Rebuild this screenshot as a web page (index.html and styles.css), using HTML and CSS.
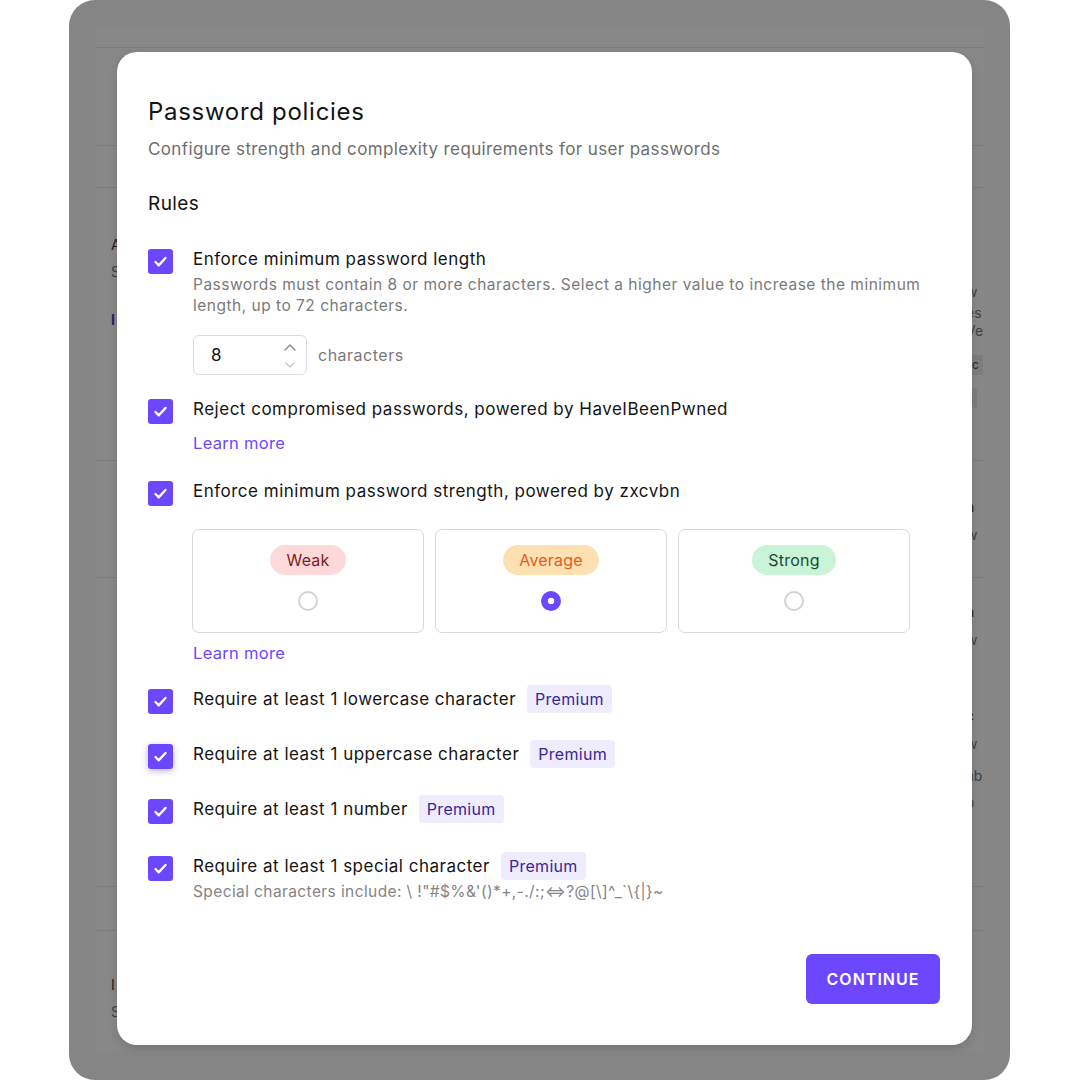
FILE: index.html
```html
<!DOCTYPE html>
<html lang="en">
<head>
<meta charset="utf-8">
<title>Password policies</title>
<link rel="stylesheet" href="styles.css">
</head>
<body>
<div class="frame">
  <div class="page">
    <div class="page-row head"></div>
    <div class="page-row r1"></div>
    <div class="page-row r2"></div>
    <div class="page-row r3">
      <span class="peek pl" style="top:49px">A</span>
      <span class="peek pl dim" style="top:76px">S</span>
      <span class="peek pl blue" style="top:124px">I</span>
      <span class="peek pr dim" style="top:96px">w</span>
      <span class="peek pr dim" style="top:117px">es</span>
      <span class="peek pr dim" style="top:135px">Ve</span>
      <span class="peek pr tag" style="top:167px">ec</span>
      <span class="peek pr tag" style="top:200px">R</span>
    </div>
    <div class="page-row r4">
      <span class="peek pr" style="top:38px">n</span>
      <span class="peek pr dim" style="top:66px">w</span>
    </div>
    <div class="page-row r5">
      <span class="peek pr" style="top:26px">n</span>
      <span class="peek pr dim" style="top:54px">w</span>
      <span class="peek pr" style="top:130px">c</span>
      <span class="peek pr dim" style="top:158px">w</span>
      <span class="peek pr dim" style="top:190px">ab</span>
      <span class="peek pr dim" style="top:216px">n</span>
    </div>
    <div class="page-row r6"></div>
    <div class="page-row r7">
      <span class="peek pl" style="top:46px">I</span>
      <span class="peek pl dim" style="top:73px">S</span>
      <span class="peek pr dim" style="top:94px">r</span>
    </div>
  </div>

  <div class="modal">
    <h1 class="title">Password policies</h1>
    <p class="subtitle">Configure strength and complexity requirements for user passwords</p>
    <h2 class="section">Rules</h2>

    <div class="rules">
      <div class="rule">
        <span class="cb"><svg viewBox="0 0 25 25"><path d="M7.5 13l3.3 3.3L17.5 9" /></svg></span>
        <div class="body">
          <div class="line"><span class="label">Enforce minimum password length</span></div>
          <p class="desc">Passwords must contain 8 or more characters. Select a higher value to increase the minimum length, up to 72 characters.</p>
          <div class="len">
            <div class="num">
              <span class="val">8</span>
              <svg class="spin" viewBox="0 0 14 34"><path class="up" d="M2 12l5-5 5 5"/><path class="down" d="M3 25l4 4 4-4"/></svg>
            </div>
            <span class="unit">characters</span>
          </div>
        </div>
      </div>

      <div class="rule r-pwned">
        <span class="cb"><svg viewBox="0 0 25 25"><path d="M7.5 13l3.3 3.3L17.5 9" /></svg></span>
        <div class="body">
          <div class="line"><span class="label">Reject compromised passwords, powered by HaveIBeenPwned</span></div>
          <a class="link">Learn more</a>
        </div>
      </div>

      <div class="rule r-strength">
        <span class="cb"><svg viewBox="0 0 25 25"><path d="M7.5 13l3.3 3.3L17.5 9" /></svg></span>
        <div class="body">
          <div class="line"><span class="label">Enforce minimum password strength, powered by zxcvbn</span></div>
          <div class="cards">
            <div class="card"><span class="pill weak">Weak</span><span class="radio"></span></div>
            <div class="card"><span class="pill avg">Average</span><span class="radio on"></span></div>
            <div class="card"><span class="pill strong">Strong</span><span class="radio"></span></div>
          </div>
          <a class="link link2">Learn more</a>
        </div>
      </div>

      <div class="rule r-lower">
        <span class="cb"><svg viewBox="0 0 25 25"><path d="M7.5 13l3.3 3.3L17.5 9" /></svg></span>
        <div class="body">
          <div class="line"><span class="label">Require at least 1 lowercase character</span><span class="badge">Premium</span></div>
        </div>
      </div>

      <div class="rule r-upper">
        <span class="cb focus"><svg viewBox="0 0 25 25"><path d="M7.5 13l3.3 3.3L17.5 9" /></svg></span>
        <div class="body">
          <div class="line"><span class="label">Require at least 1 uppercase character</span><span class="badge">Premium</span></div>
        </div>
      </div>

      <div class="rule r-number">
        <span class="cb"><svg viewBox="0 0 25 25"><path d="M7.5 13l3.3 3.3L17.5 9" /></svg></span>
        <div class="body">
          <div class="line"><span class="label">Require at least 1 number</span><span class="badge">Premium</span></div>
        </div>
      </div>

      <div class="rule r-special">
        <span class="cb"><svg viewBox="0 0 25 25"><path d="M7.5 13l3.3 3.3L17.5 9" /></svg></span>
        <div class="body">
          <div class="line"><span class="label">Require at least 1 special character</span><span class="badge">Premium</span></div>
          <p class="desc desc2">Special characters include: \ !"#$%&amp;'()*+,-./:;⇔?@[\]^_`\{|}~</p>
        </div>
      </div>
    </div>

    <div class="footer">
      <button class="btn">CONTINUE</button>
    </div>
  </div>
</div>
</body>
</html>
```

FILE: styles.css
```css
* { box-sizing: border-box; }

html, body {
  margin: 0;
  padding: 0;
  background: #ffffff;
}

body {
  font-family: Inter, "Noto Sans", "Liberation Sans", sans-serif;
  color: #141414;
  width: 1080px;
  height: 1081px;
  overflow: hidden;
}

.frame {
  position: relative;
  margin-left: 69px;
  width: 941px;
  height: 1080px;
  border-radius: 26px;
  background: #858585;
  padding: 27px 26px;
}

.page {
  position: relative;
  height: 1026px;
  background: #878787;
  display: flex;
  flex-direction: column;
}

.page-row {
  position: relative;
  flex: none;
  border-bottom: 1px solid #7b7b7b;
}
.head { height: 21px; }
.r1 { height: 98px; }
.r2 { height: 42px; }
.r3 { height: 273px; }
.r4 { height: 117px; }
.r5 { height: 309px; }
.r6 { height: 44px; }
.r7 { flex: 1; border-bottom: none; }

.peek {
  position: absolute;
  font-size: 14px;
  line-height: 16px;
  color: #1e1e1e;
  white-space: nowrap;
}
.peek.pl { left: 16px; }
.peek.pr { left: 871px; }
.peek.dim { color: #404040; }
.peek.blue { color: #2a2070; font-weight: 700; }
.peek.tag {
  font-size: 12px;
  color: #2a2a2a;
  background: #7d7d7d;
  padding: 2px 4px;
  left: 866px;
}

/* Modal */
.modal {
  position: absolute;
  left: 48px;
  top: 52px;
  width: 855px;
  height: 993px;
  background: #ffffff;
  border-radius: 20px;
  box-shadow: 0 4px 10px rgba(0, 0, 0, 0.12);
  padding: 44px 32px 41px 31px;
  display: flex;
  flex-direction: column;
}

.title {
  margin: 0;
  font-size: 24px;
  line-height: 32px;
  font-weight: 400;
  letter-spacing: 0.7px;
  color: #141414;
}

.subtitle {
  margin: 9px 0 0;
  font-size: 17px;
  line-height: 24px;
  letter-spacing: 0.37px;
  color: #6e6e6e;
}

.section {
  margin: 30px 0 0;
  font-size: 19px;
  line-height: 26px;
  font-weight: 400;
  letter-spacing: 0.4px;
  color: #141414;
}

.rules {
  margin-top: 28px;
  display: flex;
  flex-direction: column;
}

.rule {
  display: flex;
  gap: 20px;
  align-items: flex-start;
}

.r-pwned { margin-top: 20px; }
.r-strength { margin-top: 22px; }
.r-lower { margin-top: 20px; }
.r-upper { margin-top: 26px; }
.r-number { margin-top: 26px; }
.r-special { margin-top: 28px; }

.cb {
  flex: none;
  width: 25px;
  height: 25px;
  margin-top: 4px;
  border-radius: 3px;
  background: #6c47ff;
  display: flex;
}
.cb svg { width: 25px; height: 25px; }
.cb path {
  fill: none;
  stroke: #ffffff;
  stroke-width: 2.4;
  stroke-linecap: round;
  stroke-linejoin: round;
}
.cb.focus { box-shadow: 0 2px 6px rgba(60, 40, 160, 0.35); }

.body { flex: 1; min-width: 0; }

.line {
  display: flex;
  align-items: center;
  gap: 11px;
  height: 28px;
}

.label {
  font-size: 17px;
  line-height: 24px;
  letter-spacing: 0.5px;
  color: #141414;
}

.badge {
  font-size: 16px;
  line-height: 28px;
  padding: 0 8px;
  letter-spacing: 0.3px;
  border-radius: 4px;
  background: #efecfd;
  color: #3a2597;
}

.desc {
  margin: 1px 0 0;
  font-size: 15.5px;
  line-height: 21px;
  letter-spacing: 0.5px;
  color: #7a7a7a;
  max-width: 740px;
}
.desc2 { margin-top: 1px; letter-spacing: 0.4px; color: #858585; }

.len {
  margin-top: 19px;
  display: flex;
  align-items: center;
  gap: 11px;
}

.num {
  width: 114px;
  height: 40px;
  border: 1px solid #dcdcdc;
  border-radius: 6px;
  display: flex;
  align-items: center;
  justify-content: space-between;
  padding: 0 9px 0 17px;
}
.val { font-size: 17px; color: #141414; }
.spin { width: 14px; height: 34px; }
.spin path { fill: none; stroke-width: 1.4; stroke-linecap: round; stroke-linejoin: round; }
.spin .up { stroke: #8a8a8a; }
.spin .down { stroke: #c8c8c8; }

.unit { font-size: 16px; letter-spacing: 0.5px; color: #7a7a7a; }

.link {
  display: block;
  margin-top: 8px;
  font-size: 16.5px;
  line-height: 24px;
  letter-spacing: 0.3px;
  color: #6c47ff;
  text-decoration: none;
}
.link2 { margin-top: 8px; }

.cards {
  margin-top: 24px;
  margin-left: -1px;
  display: grid;
  grid-template-columns: repeat(3, 232px);
  gap: 11px;
}

.card {
  height: 104px;
  border: 1px solid #d9d9d9;
  border-radius: 7px;
  display: flex;
  flex-direction: column;
  align-items: center;
  padding-top: 15px;
  gap: 16px;
}

.pill {
  height: 30px;
  line-height: 30px;
  padding: 0 16px;
  border-radius: 15px;
  font-size: 16px;
  letter-spacing: 0.2px;
}
.weak { background: #fdd9d9; color: #7e1d1d; }
.avg { background: #fde1b2; color: #ea5a1c; }
.strong { background: #c9f4d8; color: #1c4a2f; }

.radio {
  width: 20px;
  height: 20px;
  border-radius: 50%;
  border: 2px solid #d3d3d3;
  background: #fff;
}
.radio.on {
  border: none;
  background: radial-gradient(circle, #ffffff 0 3px, #6c47ff 3.6px);
}

.footer {
  margin-top: auto;
  display: flex;
  justify-content: flex-end;
}

.btn {
  width: 134px;
  height: 50px;
  border: none;
  border-radius: 6px;
  background: #6c47ff;
  color: #ffffff;
  font-family: Inter, "Noto Sans", "Liberation Sans", sans-serif;
  font-size: 16px;
  font-weight: 600;
  letter-spacing: 1px;
}
```
